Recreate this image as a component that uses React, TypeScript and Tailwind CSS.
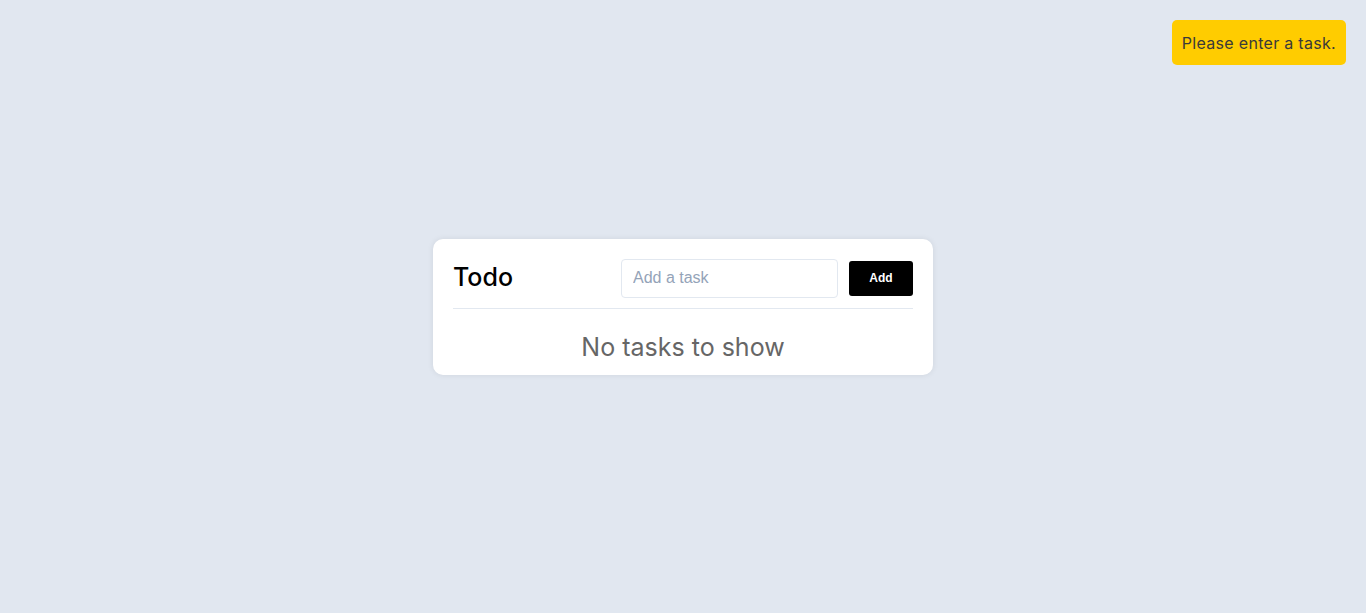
import { useState } from "react";

function Toast({ message }: { message: string }) {
	return (
		<div className="absolute right-[20px] top-[20px] flex h-[45px] items-center rounded-[5px] bg-[#ffcc00] px-[10px] text-[16px] tracking-[0.3px] text-[#3a3a3a] font-['Inter','Liberation_Sans',sans-serif]">
			{message}
		</div>
	);
}

export default function App() {
	const [task, setTask] = useState("");
	const [tasks] = useState<string[]>([]);

	return (
		<div className="relative flex h-[613px] w-full items-center justify-center bg-[#e1e7f0] font-['Inter','Liberation_Sans',sans-serif]">
			<Toast message="Please enter a task." />
			<div className="w-[500px] rounded-[10px] bg-white px-[20px] pt-[20px] pb-[10px] shadow-[0_0_6px_rgba(0,0,0,0.08)]">
				<div className="flex items-center justify-between border-b border-[#e2e8f0] pb-[10px]">
					<h1 className="text-[25px] font-medium text-black">Todo</h1>
					<div className="flex items-center gap-[11px]">
						<input
							value={task}
							onChange={(e) => setTask(e.target.value)}
							placeholder="Add a task"
							className="h-[39px] w-[217px] rounded-[4px] border border-[#e2e8f0] px-[11px] text-[16px] font-['Liberation_Sans',sans-serif] text-black outline-none placeholder:text-[#94a3b8]"
						/>
						<button className="h-[35px] w-[64px] rounded-[3px] bg-black text-[12px] font-bold text-white font-['Liberation_Sans',sans-serif]">
							Add
						</button>
					</div>
				</div>
				{tasks.length === 0 && (
					<p className="mt-[20px] text-center text-[25px] leading-[36px] text-[#666666]">No tasks to show</p>
				)}
			</div>
		</div>
	);
}
